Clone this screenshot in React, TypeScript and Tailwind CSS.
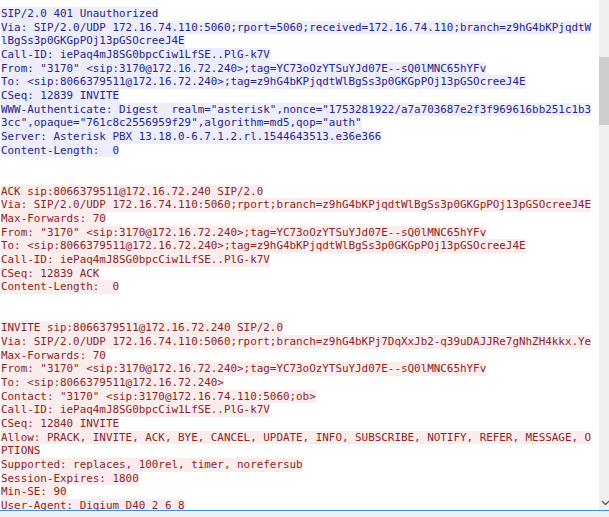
const server = [
  'SIP/2.0 401 Unauthorized',
  'Via: SIP/2.0/UDP 172.16.74.110:5060;rport=5060;received=172.16.74.110;branch=z9hG4bKPjqdtW',
  'lBgSs3p0GKGpPOj13pGSOcreeJ4E',
  'Call-ID: iePaq4mJ8SG0bpcCiw1LfSE..PlG-k7V',
  'From: "3170" <sip:3170@172.16.72.240>;tag=YC73oOzYTSuYJd07E--sQ0lMNC65hYFv',
  'To: <sip:8066379511@172.16.72.240>;tag=z9hG4bKPjqdtWlBgSs3p0GKGpPOj13pGSOcreeJ4E',
  'CSeq: 12839 INVITE',
  'WWW-Authenticate: Digest  realm="asterisk",nonce="1753281922/a7a703687e2f3f969616bb251c1b3',
  '3cc",opaque="761c8c2556959f29",algorithm=md5,qop="auth"',
  'Server: Asterisk PBX 13.18.0-6.7.1.2.rl.1544643513.e36e366',
  'Content-Length:  0',
];

const ack = [
  'ACK sip:8066379511@172.16.72.240 SIP/2.0',
  'Via: SIP/2.0/UDP 172.16.74.110:5060;rport;branch=z9hG4bKPjqdtWlBgSs3p0GKGpPOj13pGSOcreeJ4E',
  'Max-Forwards: 70',
  'From: "3170" <sip:3170@172.16.72.240>;tag=YC73oOzYTSuYJd07E--sQ0lMNC65hYFv',
  'To: <sip:8066379511@172.16.72.240>;tag=z9hG4bKPjqdtWlBgSs3p0GKGpPOj13pGSOcreeJ4E',
  'Call-ID: iePaq4mJ8SG0bpcCiw1LfSE..PlG-k7V',
  'CSeq: 12839 ACK',
  'Content-Length:  0',
];

const invite = [
  'INVITE sip:8066379511@172.16.72.240 SIP/2.0',
  'Via: SIP/2.0/UDP 172.16.74.110:5060;rport;branch=z9hG4bKPj7DqXxJb2-q39uDAJJRe7gNhZH4kkx.Ye',
  'Max-Forwards: 70',
  'From: "3170" <sip:3170@172.16.72.240>;tag=YC73oOzYTSuYJd07E--sQ0lMNC65hYFv',
  'To: <sip:8066379511@172.16.72.240>',
  'Contact: "3170" <sip:3170@172.16.74.110:5060;ob>',
  'Call-ID: iePaq4mJ8SG0bpcCiw1LfSE..PlG-k7V',
  'CSeq: 12840 INVITE',
  'Allow: PRACK, INVITE, ACK, BYE, CANCEL, UPDATE, INFO, SUBSCRIBE, NOTIFY, REFER, MESSAGE, O',
  'PTIONS',
  'Supported: replaces, 100rel, timer, norefersub',
  'Session-Expires: 1800',
  'Min-SE: 90',
  'User-Agent: Digium D40 2 6 8',
];

function Block({ lines, side }: { lines: string[]; side: 'server' | 'client' }) {
  const cls =
    side === 'server'
      ? 'w-fit whitespace-pre bg-[#ededfb] text-[#25258a]'
      : 'w-fit whitespace-pre bg-[#fbeded] text-[#8a2525]';
  return (
    <>
      {lines.map((l, i) => (
        <div key={i} className={cls}>
          {l}
        </div>
      ))}
    </>
  );
}

function Gap() {
  return <div className="h-[27.34px]" />;
}

export default function App() {
  return (
    <div className="flex h-[517px] w-[609px] flex-col overflow-hidden bg-white">
      <div className="flex min-h-0 flex-1">
        <div
          className="min-w-0 flex-1 overflow-hidden pl-[1px] pt-[7px] text-[10.9px] leading-[13.67px]"
          style={{ fontFamily: '"DejaVu Sans Mono", "Liberation Mono", monospace' }}
        >
          <Block lines={server} side="server" />
          <Gap />
          <Block lines={ack} side="client" />
          <Gap />
          <Block lines={invite} side="client" />
        </div>
        <div className="relative w-[10px] bg-[#f0f0f0]">
          <div className="absolute left-0 right-0 top-[57px] h-[68px] bg-[#cdcdcd]" />
          <svg
            className="absolute bottom-[4px] left-[2px]"
            width="9"
            height="6"
            viewBox="0 0 9 6"
          >
            <path d="M1 1l3.5 3.5L8 1" fill="none" stroke="#606060" strokeWidth="1.3" />
          </svg>
        </div>
      </div>
      <div className="h-px bg-[#3c8fe0]" />
      <div className="h-[6px] bg-[#f0f0f0]" />
    </div>
  );
}
